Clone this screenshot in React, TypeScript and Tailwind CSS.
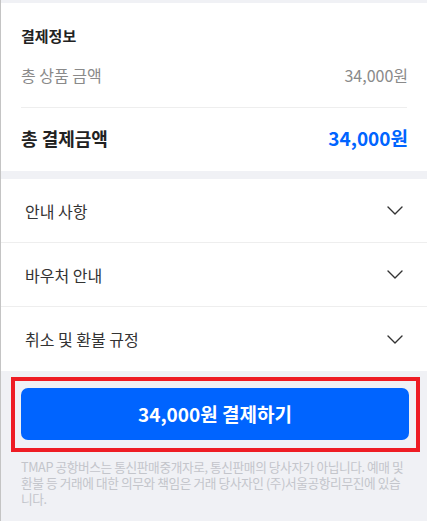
import { clsx } from 'clsx'

const font = { fontFamily: '"Noto Sans CJK KR", "Noto Sans", sans-serif' }

const sections = ['안내 사항', '바우처 안내', '취소 및 환불 규정']

function Chevron() {
  return (
    <svg width="16" height="9" viewBox="0 0 16 9" fill="none">
      <path d="M1 1L8 8L15 1" stroke="#333333" strokeWidth="1.4" strokeLinecap="round" strokeLinejoin="round" />
    </svg>
  )
}

export default function App() {
  return (
    <div
      className="min-h-[521px] w-full border-l border-[#c4c4c4] bg-[#f0f1f5] pt-[3px] text-[#222222]"
      style={font}
    >
      <section className="bg-white px-[20px] pt-[22px] pb-[20px]">
        <h2 className="text-[15px] font-bold leading-[22px] text-[#222222]">결제정보</h2>
        <div className="mt-[17px] flex items-center justify-between text-[16px] leading-[22px] text-[#8a8a8a]">
          <span>총 상품 금액</span>
          <span className="mr-[-1px]">34,000원</span>
        </div>
        <div className="mt-[21px] h-px bg-[#eeeeee]" />
        <div className="mt-[17px] flex items-center justify-between leading-[26px]">
          <span className="text-[18px] font-bold text-[#222222]">총 결제금액</span>
          <span className="mr-[-1px] text-[19px] font-bold text-[#0064ff]">34,000원</span>
        </div>
      </section>

      <div className="mt-[8px] bg-white">
        {sections.map((label, index) => (
          <div
            key={label}
            className={clsx(
              'flex h-[64px] items-center justify-between pl-[24px] pr-[24px]',
              index < sections.length - 1 && 'border-b border-[#eeeeee]'
            )}
          >
            <span className="text-[16px] text-[#333333]">{label}</span>
            <Chevron />
          </div>
        ))}
      </div>

      <div className="ml-[10px] mr-[7px] mt-[6px] border-4 border-[#ee1c24] pt-[7px] pb-[8px] pl-[6px] pr-[7px]">
        <button className="flex h-[52px] w-full items-center justify-center rounded-[7px] bg-[#0064ff] text-[19px] font-bold text-white">
          34,000원 결제하기
        </button>
      </div>

      <p className="mt-[7px] pl-[20px] pr-[19px] pb-[12px] text-[12.7px] leading-[16px] tracking-[-0.4px] text-[#c3c5cb]">
        TMAP 공항버스는 통신판매중개자로, 통신판매의 당사자가 아닙니다. 예매 및 환불 등 거래에 대한 의무와 책임은 거래 당사자인
        (주)서울공항리무진에 있습니다.
      </p>
    </div>
  )
}
